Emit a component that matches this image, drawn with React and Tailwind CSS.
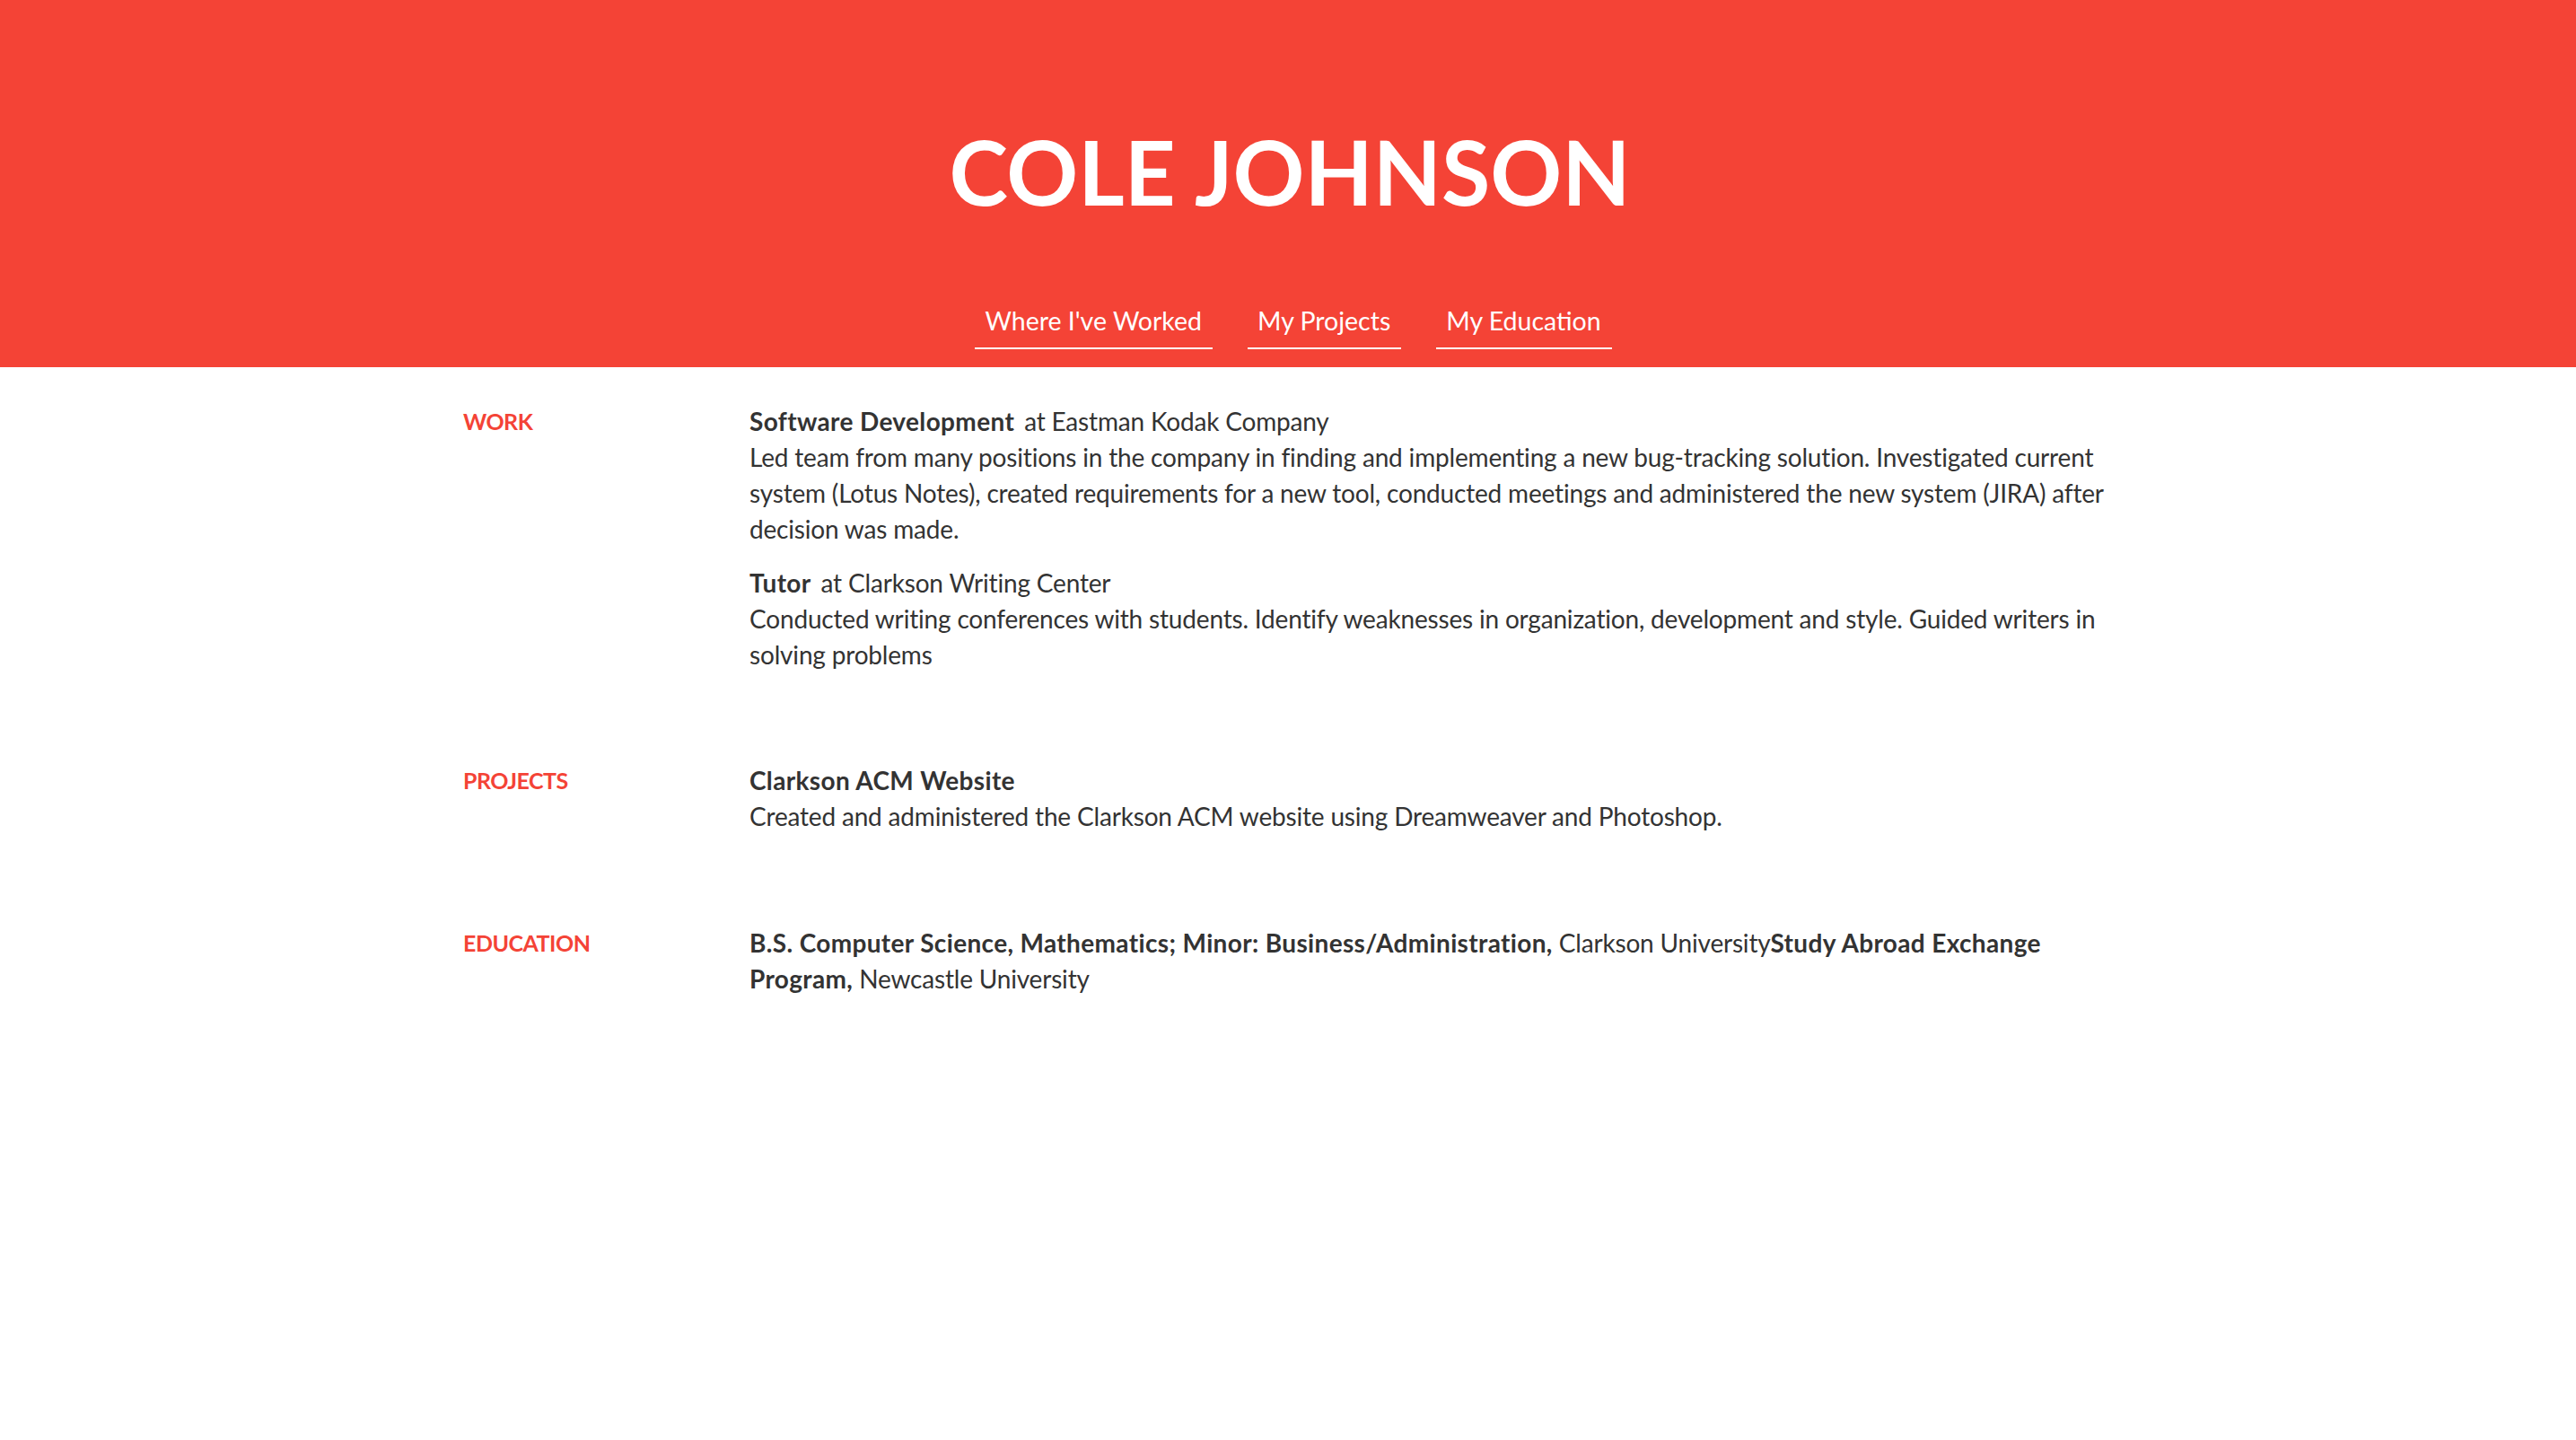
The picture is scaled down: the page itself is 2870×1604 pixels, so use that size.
import React from "react";

const navItems = ["Where I've Worked", "My Projects", "My Education"];

function B({ children }) {
  return <strong className="font-bold tracking-[0.35px]">{children}</strong>;
}

function Section({ label, children, className = "" }) {
  return (
    <div className={"flex " + className}>
      <div className="w-[319px] shrink-0 text-[25px] leading-[40px] font-bold uppercase tracking-[-0.5px] text-[#f44336]">
        {label}
      </div>
      <div className="w-[1540px] text-[28px] leading-[40px] tracking-[-0.18px] text-[#333333]">{children}</div>
    </div>
  );
}

export default function App() {
  return (
    <div className="min-h-[1604px] bg-white" style={{ fontFamily: "Lato, 'Open Sans', sans-serif" }}>
      <header className="bg-[#f44336] pt-[141px] pb-[20px] text-white">
        <h1 className="pl-[4px] text-center text-[99px] leading-none font-bold">COLE JOHNSON</h1>
        <nav className="mt-[97px] flex justify-center gap-[39px] pl-[12px]">
          {navItems.map((t) => (
            <a
              key={t}
              className="border-b-2 border-white pl-[11px] pr-[12px] pb-[10px] text-[28.5px] leading-[40px] text-white"
            >
              {t}
            </a>
          ))}
        </nav>
      </header>

      <main className="pl-[516px] pt-[40px]">
        <Section label="Work">
          <div className="mb-[20px]">
            <div>
              <B>Software Development</B>
              <span className="ml-[4px]"> at Eastman Kodak Company</span>
            </div>
            <div>
              Led team from many positions in the company in finding and implementing a new bug-tracking solution.
              Investigated current system (Lotus Notes), created requirements for a new tool, conducted meetings and
              administered the new system (JIRA) after decision was made.
            </div>
          </div>
          <div className="mb-[20px]">
            <div>
              <B>Tutor</B>
              <span className="ml-[4px]"> at Clarkson Writing Center</span>
            </div>
            <div>
              Conducted writing conferences with students. Identify weaknesses in organization, development and style.
              Guided writers in solving problems
            </div>
          </div>
        </Section>

        <Section label="Projects" className="mt-[80px]">
          <div className="mb-[20px]">
            <div>
              <B>Clarkson ACM Website</B>
            </div>
            <div>Created and administered the Clarkson ACM website using Dreamweaver and Photoshop.</div>
          </div>
        </Section>

        <Section label="Education" className="mt-[81px]">
          <div>
            <B>B.S. Computer Science, Mathematics; Minor: Business/Administration,</B> Clarkson University
            <B>Study Abroad Exchange Program,</B> Newcastle University
          </div>
        </Section>
      </main>
    </div>
  );
}
